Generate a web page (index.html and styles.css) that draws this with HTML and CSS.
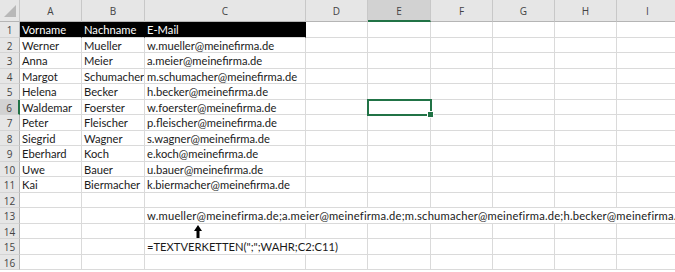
FILE: index.html
```html
<!DOCTYPE html>
<html lang="de">
<head>
  <meta charset="UTF-8">
  <title>TEXTVERKETTEN</title>
  <link rel="stylesheet" href="styles.css">
</head>
<body>
  <div class="sheet">
    <div class="corner"><svg width="14" height="14" viewBox="0 0 14 14"><polygon points="14,2 14,14 2,14" fill="#b8b8b8"/></svg></div>
    <div class="h">A</div><div class="h">B</div><div class="h">C</div><div class="h">D</div>
    <div class="h sel">E</div><div class="h">F</div><div class="h">G</div><div class="h">H</div><div class="h">I</div>

    <div class="n">1</div><div class="hd">Vorname</div><div class="hd">Nachname</div><div class="hd">E-Mail</div>
    <div></div><div></div><div></div><div></div><div></div><div></div>

    <div class="n">2</div><div>Werner</div><div>Mueller</div><div>w.mueller@meinefirma.de</div>
    <div></div><div></div><div></div><div></div><div></div><div></div>

    <div class="n">3</div><div>Anna</div><div>Meier</div><div>a.meier@meinefirma.de</div>
    <div></div><div></div><div></div><div></div><div></div><div></div>

    <div class="n">4</div><div>Margot</div><div>Schumacher</div><div>m.schumacher@meinefirma.de</div>
    <div></div><div></div><div></div><div></div><div></div><div></div>

    <div class="n">5</div><div>Helena</div><div>Becker</div><div>h.becker@meinefirma.de</div>
    <div></div><div></div><div></div><div></div><div></div><div></div>

    <div class="n sel">6</div><div>Waldemar</div><div>Foerster</div><div>w.foerster@meinefirma.de</div>
    <div></div><div class="active"><span class="handle"></span></div><div></div><div></div><div></div><div></div>

    <div class="n">7</div><div>Peter</div><div>Fleischer</div><div>p.fleischer@meinefirma.de</div>
    <div></div><div></div><div></div><div></div><div></div><div></div>

    <div class="n">8</div><div>Siegrid</div><div>Wagner</div><div>s.wagner@meinefirma.de</div>
    <div></div><div></div><div></div><div></div><div></div><div></div>

    <div class="n">9</div><div>Eberhard</div><div>Koch</div><div>e.koch@meinefirma.de</div>
    <div></div><div></div><div></div><div></div><div></div><div></div>

    <div class="n">10</div><div>Uwe</div><div>Bauer</div><div>u.bauer@meinefirma.de</div>
    <div></div><div></div><div></div><div></div><div></div><div></div>

    <div class="n">11</div><div>Kai</div><div>Biermacher</div><div>k.biermacher@meinefirma.de</div>
    <div></div><div></div><div></div><div></div><div></div><div></div>

    <div class="n">12</div><div></div><div></div><div></div>
    <div></div><div></div><div></div><div></div><div></div><div></div>

    <div class="n">13</div><div></div><div></div>
    <div class="span-all">w.mueller@meinefirma.de;a.meier@meinefirma.de;m.schumacher@meinefirma.de;h.becker@meinefirma.de;w.foerster@meinefirma.de</div>

    <div class="n">14</div><div></div><div></div>
    <div class="arrow-cell"><svg width="8" height="14" viewBox="0 0 8 14"><polygon points="4,0 8,6 5.5,6 5.5,14 2.5,14 2.5,6 0,6" fill="#000"/></svg></div>
    <div></div><div></div><div></div><div></div><div></div><div></div>

    <div class="n">15</div><div></div><div></div><div class="span-two">=TEXTVERKETTEN(";";WAHR;C2:C11)</div>
    <div></div><div></div><div></div><div></div><div></div>

    <div class="n">16</div><div></div><div></div><div></div>
    <div></div><div></div><div></div><div></div><div></div><div></div>
  </div>
</body>
</html>
```

FILE: styles.css
```css
body {
  margin: 0;
  background: #fff;
  font-family: Lato, 'Liberation Sans', sans-serif;
  font-size: 11.2px;
  color: #1a1a1a;
  overflow: hidden;
}
.sheet {
  display: grid;
  grid-template-columns: 20px 62px 63px 161px 62px 63px 62px 62px 62px 62px;
  grid-template-rows: 22px;
  grid-auto-rows: 15.5px;
  width: 700px;
}
.sheet > div {
  box-sizing: border-box;
  border-right: 1px solid #dadada;
  border-bottom: 1px solid #dadada;
  padding: 0 2px;
  line-height: 16px;
  white-space: nowrap;
  overflow: hidden;
}
.sheet > .corner {
  background: #e6e6e6;
  border-right: 1px solid #c8c8c8;
  border-bottom: 1px solid #b5b5b5;
  padding: 3px 0 0 2px;
}
.sheet > .h {
  background: #e6e6e6;
  border-right: 1px solid #c8c8c8;
  border-bottom: 1px solid #b5b5b5;
  text-align: center;
  color: #444;
  line-height: 23px;
  font-family: 'Open Sans', sans-serif;
  font-size: 10px;
}
.sheet > .h.sel {
  background: #d2d2d2;
  border-bottom: 2px solid #217346;
}
.sheet > .n {
  background: #e6e6e6;
  border-right: 1px solid #b5b5b5;
  border-bottom: 1px solid #d4d4d4;
  text-align: center;
  color: #444;
  padding: 0;
  font-family: 'Open Sans', sans-serif;
  font-size: 10px;
}
.sheet > .n.sel {
  background: #d2d2d2;
  border-right: 2px solid #217346;
}
.sheet > .hd {
  background: #000;
  color: #fff;
  border-right-color: #000;
}
.sheet > .span-all {
  grid-column: 4 / -1;
  letter-spacing: 0.2px;
}
.sheet > .span-two {
  grid-column: span 2;
}
.sheet > .arrow-cell {
  padding-left: 49px;
  line-height: 0;
  padding-top: 1px;
}
.sheet > .active {
  position: relative;
  overflow: visible;
  outline: 2px solid #217346;
  outline-offset: -1px;
}
.handle {
  position: absolute;
  right: -4px;
  bottom: -4px;
  width: 5px;
  height: 5px;
  background: #217346;
  border: 1px solid #fff;
}
```
